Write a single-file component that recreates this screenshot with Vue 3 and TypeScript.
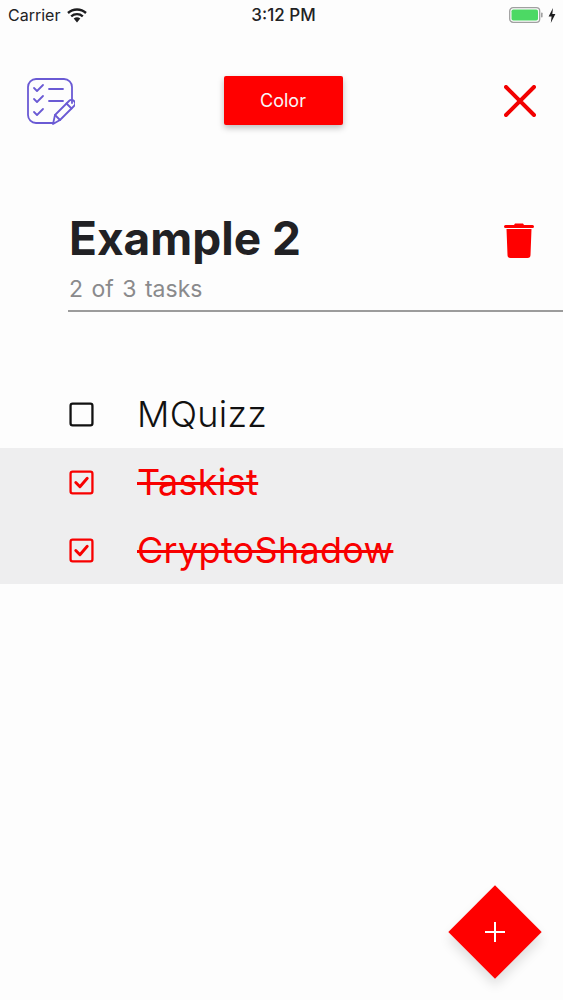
<script setup lang="ts">
interface Task { name: string; done: boolean }
const tasks: Task[] = [
  { name: 'MQuizz', done: false },
  { name: 'Taskist', done: true },
  { name: 'CryptoShadow', done: true },
]
</script>

<template>
  <div class="screen">
    <header class="status">
      <div class="status-left">
        <span>Carrier</span>
        <svg class="wifi" width="20" height="15" viewBox="0 0 20 15">
          <path d="M10 14.500 6.700 10.600a5 5 0 0 1 6.600 0Z" fill="#1d1d1f" />
          <path d="M1 5a13.400 13.400 0 0 1 18 0" fill="none" stroke="#1d1d1f" stroke-width="2.400" />
          <path d="M4.200 8.300a8.800 8.800 0 0 1 11.600 0" fill="none" stroke="#1d1d1f" stroke-width="2.400" />
        </svg>
      </div>
      <span class="clock">3:12 PM</span>
      <div class="status-right">
        <svg width="34" height="16" viewBox="0 0 34 16">
          <rect x="0.700" y="0.700" width="30" height="14.600" rx="3.400" fill="none" stroke="#a0a0a0" stroke-width="1.300" />
          <rect x="2.500" y="2.500" width="26.500" height="11" rx="1.800" fill="#4cd964" />
          <rect x="32" y="5.500" width="1.600" height="5" rx="0.800" fill="#a0a0a0" />
        </svg>
        <svg width="8" height="15" viewBox="0 0 8 15">
          <path d="M5 0 0.600 8.500H3.600L2.800 15 7.400 6H4.300Z" fill="#1d1d1f" />
        </svg>
      </div>
    </header>

    <nav class="toolbar">
      <svg class="logo" width="48" height="48" viewBox="0 0 48 48" fill="none" stroke="#6a5ad4" stroke-width="1.800" stroke-linecap="round" stroke-linejoin="round">
        <path d="M45 26V10a8 8 0 0 0-8-8H9a8 8 0 0 0-8 8v28a8 8 0 0 0 8 8h17" />
        <path d="M7 11l3 3 6-6M7 22l3 3 6-6M7 35l3 3 6-6" />
        <path d="M22 12h14M22 24h14" />
        <path d="M26 47l2-9 14-14a3.300 3.300 0 0 1 5 5L33 43Z" />
        <path d="M39.500 26.500l5 5M28 38l5 5" />
      </svg>
      <button class="color-btn">Color</button>
      <svg class="close" width="32" height="32" viewBox="0 0 32 32" fill="none" stroke="#f20000" stroke-width="4" stroke-linecap="round">
        <path d="M2 2l28 28M30 2 2 30" />
      </svg>
    </nav>

    <section class="heading">
      <div class="heading-row">
        <div>
          <h1>Example 2</h1>
          <p>2 of 3 tasks</p>
        </div>
        <svg class="trash" width="30" height="35" viewBox="0 0 30 35">
          <path d="M10 2 11 .5h8L20 2h8.500A1.500 1.500 0 0 1 30 3.500 1.500 1.500 0 0 1 28.500 5H1.500A1.500 1.500 0 0 1 0 3.500 1.500 1.500 0 0 1 1.500 2Z" fill="#ff0000" />
          <path d="M2.500 6h25L26.500 32a3 3 0 0 1-3 3H6.500a3 3 0 0 1-3-3Z" fill="#ff0000" />
        </svg>
      </div>
    </section>

    <ul class="tasks">
      <li v-for="task in tasks" :key="task.name" class="task" :class="{ done: task.done }">
        <svg width="25" height="25" viewBox="0 0 24 24" fill="none" stroke="currentColor" stroke-width="2.200" stroke-linejoin="round" stroke-linecap="round">
          <rect x="1.500" y="1.500" width="21" height="21" rx="2" />
          <path v-if="task.done" d="M6.500 12l4 4 7-8" stroke-width="2.800" />
        </svg>
        <span class="task-name">{{ task.name }}</span>
      </li>
    </ul>

    <button class="fab" aria-label="Add task">
      <svg width="20" height="20" viewBox="0 0 20 20" stroke="#fff" stroke-width="2">
        <path d="M10 0v20M0 10h20" />
      </svg>
    </button>
  </div>
</template>

<style>
html, body { margin: 0; background: #fdfdfd; }
</style>

<style scoped>
.screen {
  position: relative;
  width: 563px;
  height: 1000px;
  overflow: hidden;
  background: #fdfdfd;
  font-family: Inter, "Liberation Sans", sans-serif;
}
.status {
  height: 30px;
  padding: 0 7px 0 8px;
  display: grid;
  grid-template-columns: 1fr auto 1fr;
  align-items: center;
  font-size: 16px;
  color: #222224;
}
.status-left { display: flex; align-items: center; gap: 7px; }
.status-right { display: flex; align-items: center; justify-content: flex-end; gap: 5px; }
.clock { margin-left: 3px; font-size: 17px; font-weight: 500; }
.toolbar {
  margin-top: 46px;
  height: 49px;
  padding: 0 27px;
  display: grid;
  grid-template-columns: 1fr auto 1fr;
  align-items: center;
}
.logo { justify-self: start; }
.close { justify-self: end; }
.color-btn {
  width: 119px;
  height: 49px;
  margin-left: 3px;
  border: 0;
  border-radius: 2px;
  background: #ff0000;
  color: #f8f8f8;
  font: 400 18px Inter, sans-serif;
  box-shadow: 0 3px 6px rgba(0, 0, 0, 0.25);
}
.heading {
  margin: 84px 0 0 68px;
  border-bottom: 2px solid #9c9c9c;
  height: 101px;
}
.heading-row {
  display: flex;
  justify-content: space-between;
  align-items: flex-start;
  padding-right: 29px;
}
h1 {
  margin: 1px 0 0 1px;
  font-size: 46px;
  line-height: 56px;
  font-weight: 700;
  color: #212124;
}
p {
  margin: 9px 0 0 1px;
  font-size: 23px;
  line-height: 28px;
  word-spacing: 2px;
  color: #8a8a8c;
}
.trash { margin-top: 14px; }
.tasks {
  margin: 68px 0 0;
  padding: 0;
  list-style: none;
}
.task {
  height: 68px;
  padding-left: 69px;
  display: flex;
  align-items: center;
  gap: 43px;
  color: #111;
}
.task-name {
  font-size: 36px;
  font-weight: 350;
  letter-spacing: 0.3px;
}
.done {
  background: #eeeeef;
  color: #f80000;
}
.done .task-name {
  font-weight: 400;
  text-decoration: line-through;
}
.fab {
  position: absolute;
  left: 462px;
  top: 899px;
  width: 66px;
  height: 66px;
  padding: 0;
  border: 0;
  background: #ff0000;
  transform: rotate(45deg);
  box-shadow: 5px 5px 12px rgba(0, 0, 0, 0.12);
  display: flex;
  align-items: center;
  justify-content: center;
}
.fab svg { transform: rotate(45deg); }
</style>
